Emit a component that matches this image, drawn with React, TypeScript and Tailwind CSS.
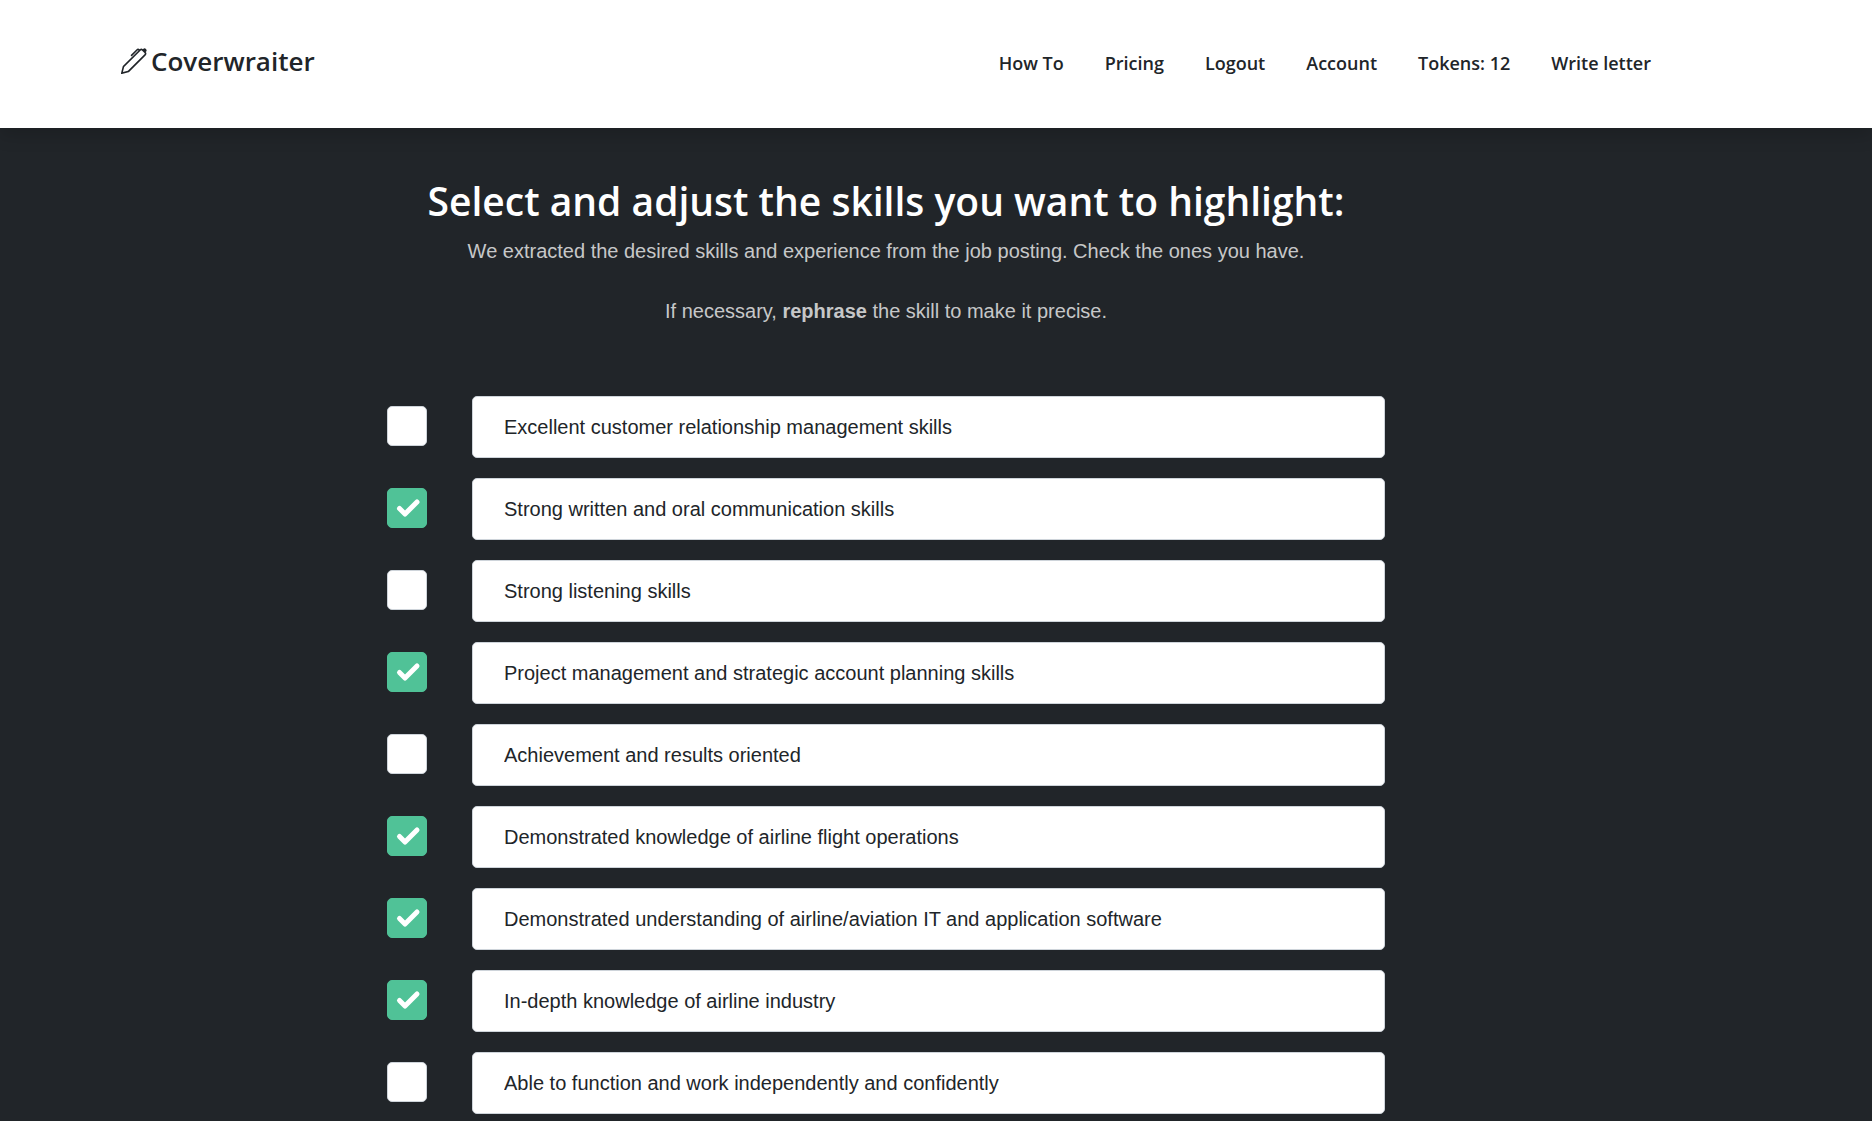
import { useState } from 'react';
import { BsPen } from 'react-icons/bs';

const navLinks = ['How To', 'Pricing', 'Logout', 'Account', 'Tokens: 12', 'Write letter'];

const initialSkills: { text: string; checked: boolean }[] = [
    { text: 'Excellent customer relationship management skills', checked: false },
    { text: 'Strong written and oral communication skills', checked: true },
    { text: 'Strong listening skills', checked: false },
    { text: 'Project management and strategic account planning skills', checked: true },
    { text: 'Achievement and results oriented', checked: false },
    { text: 'Demonstrated knowledge of airline flight operations', checked: true },
    { text: 'Demonstrated understanding of airline/aviation IT and application software', checked: true },
    { text: 'In-depth knowledge of airline industry', checked: true },
    { text: 'Able to function and work independently and confidently', checked: false },
];

function Header() {
    return (
        <header className="relative bg-white pr-[100px] shadow-[0_8px_16px_rgba(0,0,0,0.15)]">
            <div className="mx-auto flex h-32 max-w-[1530px] items-center justify-between pb-0.5 font-['Open_Sans',sans-serif] text-[#212529]">
                <a href="#" className="flex items-center gap-1 pb-1 text-[26px] font-semibold leading-8">
                    <BsPen className="size-[26px]" aria-hidden="true" />
                    Coverwraiter
                </a>
                <nav className="flex gap-[41px] text-lg font-semibold">
                    {navLinks.map((label) => (
                        <a key={label} href="#" className="whitespace-nowrap">
                            {label}
                        </a>
                    ))}
                </nav>
            </div>
        </header>
    );
}

export default function App() {
    const [skills, setSkills] = useState(initialSkills);

    function update(index: number, patch: Partial<{ text: string; checked: boolean }>) {
        setSkills(skills.map((skill, i) => (i === index ? { ...skill, ...patch } : skill)));
    }

    return (
        <div className="h-screen overflow-hidden bg-[#212529] font-['Liberation_Sans',Arial,sans-serif]">
            <Header />
            <main className="pr-[100px]">
                <div className="mx-auto max-w-[998px] pt-12">
                    <div className="text-center text-xl leading-[30px] text-white/75">
                        <h1 className="whitespace-nowrap font-['Open_Sans',sans-serif] text-[39px] font-semibold leading-[50px] text-white">
                            Select and adjust the skills you want to highlight:
                        </h1>
                        <p className="mt-2.5">
                            We extracted the desired skills and experience from the job posting. Check the ones you have.
                        </p>
                        <p className="mt-[30px]">
                            If necessary, <strong>rephrase</strong> the skill to make it precise.
                        </p>
                    </div>
                    <ul className="mt-[70px] flex flex-col gap-5">
                        {skills.map((skill, index) => (
                            <li key={index} className="flex items-center gap-[45px]">
                                <span className="relative mb-0.5 size-10 shrink-0">
                                    <input
                                        type="checkbox"
                                        checked={skill.checked}
                                        onChange={(e) => update(index, { checked: e.target.checked })}
                                        aria-label={skill.text}
                                        className="peer block size-10 appearance-none rounded-[5px] border border-[#ced4da] bg-white checked:border-[#50c297] checked:bg-[#50c297]"
                                    />
                                    <svg
                                        viewBox="0 0 40 40"
                                        className="pointer-events-none absolute inset-0 hidden fill-none stroke-white stroke-[5] peer-checked:block"
                                        strokeLinecap="round"
                                        strokeLinejoin="round"
                                        aria-hidden="true"
                                    >
                                        <path d="M12.5 20.5 18 26 30 14" />
                                    </svg>
                                </span>
                                <input
                                    type="text"
                                    value={skill.text}
                                    onChange={(e) => update(index, { text: e.target.value })}
                                    aria-label={`Skill ${index + 1}`}
                                    className="h-[62px] min-w-0 flex-1 rounded-[5px] border border-[#ced4da] bg-white px-[31px] text-xl text-[#212529]"
                                />
                            </li>
                        ))}
                    </ul>
                </div>
            </main>
        </div>
    );
}
